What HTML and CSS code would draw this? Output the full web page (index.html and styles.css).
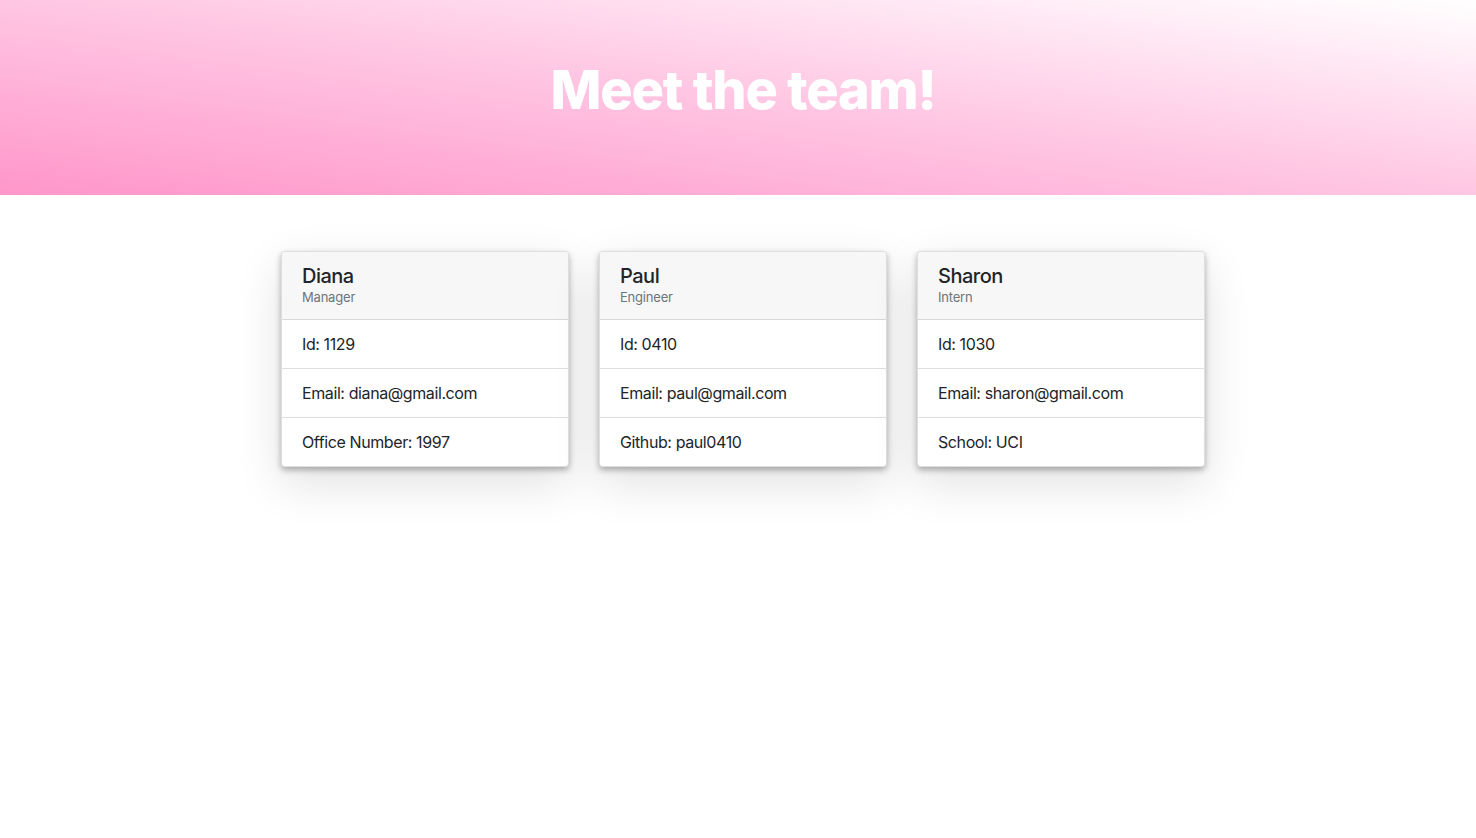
FILE: index.html
```html
<!DOCTYPE html>
<html lang="en">
<head>
<meta charset="utf-8">
<title>Team</title>
<link rel="stylesheet" href="styles.css">
</head>
<body>
<header class="hero">
  <h1 class="hero-title">Meet the team!</h1>
</header>
<main class="team">
  <div class="card">
    <div class="card-head">
      <div class="card-name">Diana</div>
      <div class="card-role">Manager</div>
    </div>
    <div class="card-row">Id: 1129</div>
    <div class="card-row">Email: diana@gmail.com</div>
    <div class="card-row">Office Number: 1997</div>
  </div>
  <div class="card">
    <div class="card-head">
      <div class="card-name">Paul</div>
      <div class="card-role">Engineer</div>
    </div>
    <div class="card-row">Id: 0410</div>
    <div class="card-row">Email: paul@gmail.com</div>
    <div class="card-row">Github: paul0410</div>
  </div>
  <div class="card">
    <div class="card-head">
      <div class="card-name">Sharon</div>
      <div class="card-role">Intern</div>
    </div>
    <div class="card-row">Id: 1030</div>
    <div class="card-row">Email: sharon@gmail.com</div>
    <div class="card-row">School: UCI</div>
  </div>
</main>
</body>
</html>
```
FILE: styles.css
```css
* { box-sizing: border-box; }
html, body { margin: 0; padding: 0; background: #fff; }
body {
  font-family: Inter, "Noto Sans", sans-serif;
  color: #212529;
  font-size: 16px;
  line-height: 1.5;
  min-height: 838px;
}
.hero {
  height: 195px;
  background: linear-gradient(to top right, #ff96ca 0%, #ffc6e3 50%, #ffffff 100%);
  display: flex;
  align-items: center;
  justify-content: center;
  padding: 0 0 14px 10px;
}
.hero-title {
  margin: 0;
  color: #fff;
  font-size: 54px;
  font-weight: 800;
  letter-spacing: -1.2px;
  line-height: 1.2;
}
.team {
  display: flex;
  justify-content: center;
  align-items: flex-start;
  gap: 30px;
  padding: 56px 0 120px 10px;
}
.card {
  width: 288px;
  border: 1px solid rgba(0,0,0,.125);
  border-radius: 4px;
  background: #fff;
  overflow: hidden;
  box-shadow: 0 3px 6px rgba(0,0,0,.3), 0 16px 48px rgba(0,0,0,.12);
}
.card-head {
  background: #f7f7f7;
  padding: 12px 20px;
  border-bottom: 1px solid rgba(0,0,0,.125);
}
.card-name {
  font-size: 20px;
  font-weight: 500;
  line-height: 24px;
  letter-spacing: -0.5px;
}
.card-role {
  font-size: 13px;
  color: #6c757d;
  line-height: 19px;
  letter-spacing: -0.2px;
}
.card-row {
  padding: 12px 20px;
  line-height: 24px;
  letter-spacing: -0.4px;
  border-bottom: 1px solid rgba(0,0,0,.125);
}
.card-row:last-child { border-bottom: none; }
```
